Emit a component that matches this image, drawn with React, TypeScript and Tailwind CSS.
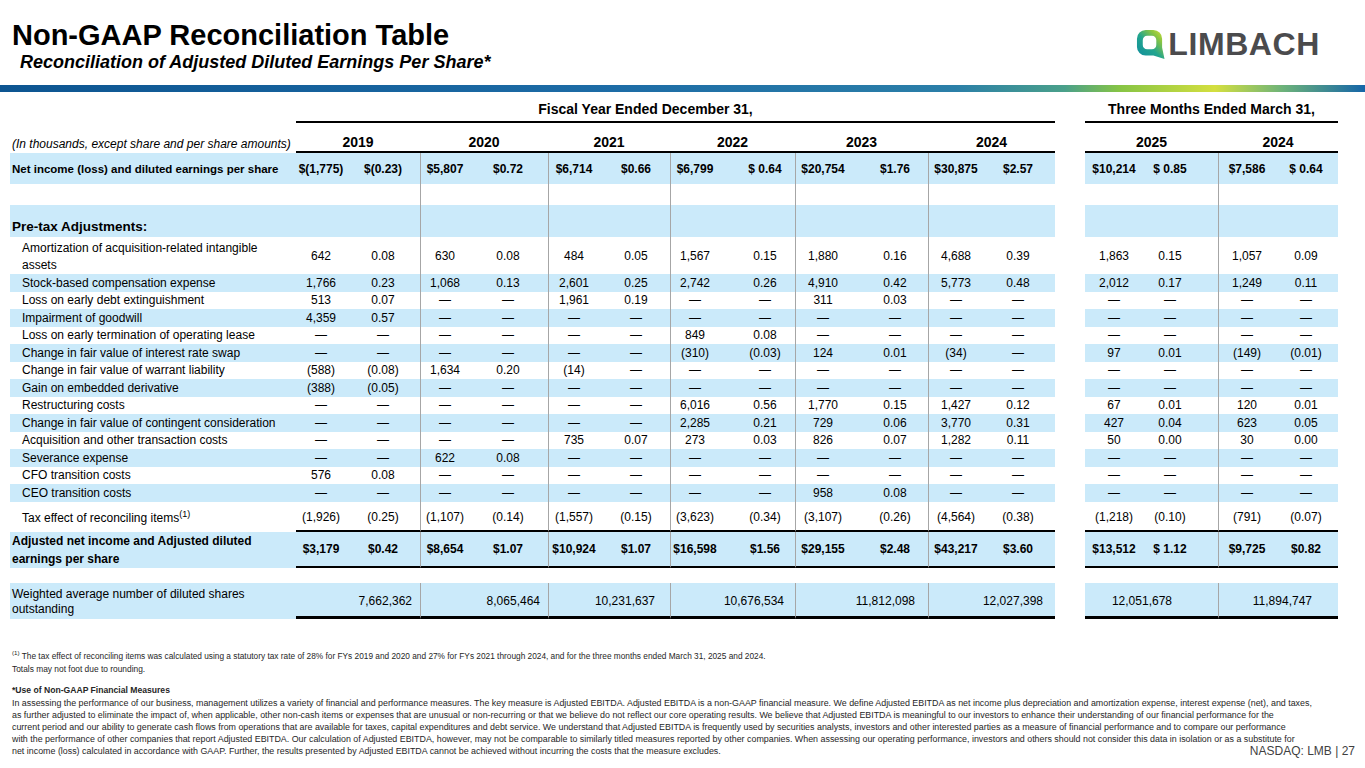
import React from "react";

const D = "—";

type Group = { w: string; a: string; pr: string; wpr: string; line: string };

// column groups, widths taken from the slide grid
const fiscal: Group[] = [
  { w: "w-[124px]", a: "w-[50px]", pr: "pr-[15px]", wpr: "pr-[8px]", line: "" },
  { w: "w-[128px]", a: "w-[48px]", pr: "pr-[18px]", wpr: "pr-[8px]", line: "border-l border-l-[#a6a6a6]" },
  { w: "w-[122px]", a: "w-[50px]", pr: "pr-[12px]", wpr: "pr-[15px]", line: "border-l border-l-[#a6a6a6]" },
  { w: "w-[125px]", a: "w-[48px]", pr: "pr-[8px]", wpr: "pr-[11px]", line: "border-l border-l-[#a6a6a6]" },
  { w: "w-[133px]", a: "w-[54px]", pr: "pr-[11px]", wpr: "pr-[13px]", line: "border-l border-l-[#a6a6a6]" },
  { w: "w-[127px]", a: "w-[54px]", pr: "pr-[15px]", wpr: "pr-[12px]", line: "border-l border-l-[#a6a6a6]" },
];

const quarter: Group[] = [
  { w: "w-[133px]", a: "w-[58px]", pr: "pr-[26px]", wpr: "pr-[46px]", line: "" },
  { w: "w-[120px]", a: "w-[56px]", pr: "pr-[10px]", wpr: "pr-[26px]", line: "border-l border-l-[#a6a6a6]" },
];

const adjustments = [
  { label: "Stock-based compensation expense", v: ["1,766", "0.23", "1,068", "0.13", "2,601", "0.25", "2,742", "0.26", "4,910", "0.42", "5,773", "0.48", "2,012", "0.17", "1,249", "0.11"] },
  { label: "Loss on early debt extinguishment", v: ["513", "0.07", D, D, "1,961", "0.19", D, D, "311", "0.03", D, D, D, D, D, D] },
  { label: "Impairment of goodwill", v: ["4,359", "0.57", D, D, D, D, D, D, D, D, D, D, D, D, D, D] },
  { label: "Loss on early termination of operating lease", v: [D, D, D, D, D, D, "849", "0.08", D, D, D, D, D, D, D, D] },
  { label: "Change in fair value of interest rate swap", v: [D, D, D, D, D, D, "(310)", "(0.03)", "124", "0.01", "(34)", D, "97", "0.01", "(149)", "(0.01)"] },
  { label: "Change in fair value of warrant liability", v: ["(588)", "(0.08)", "1,634", "0.20", "(14)", D, D, D, D, D, D, D, D, D, D, D] },
  { label: "Gain on embedded derivative", v: ["(388)", "(0.05)", D, D, D, D, D, D, D, D, D, D, D, D, D, D] },
  { label: "Restructuring costs", v: [D, D, D, D, D, D, "6,016", "0.56", "1,770", "0.15", "1,427", "0.12", "67", "0.01", "120", "0.01"] },
  { label: "Change in fair value of contingent consideration", v: [D, D, D, D, D, D, "2,285", "0.21", "729", "0.06", "3,770", "0.31", "427", "0.04", "623", "0.05"] },
  { label: "Acquisition and other transaction costs", v: [D, D, D, D, "735", "0.07", "273", "0.03", "826", "0.07", "1,282", "0.11", "50", "0.00", "30", "0.00"] },
  { label: "Severance expense", v: [D, D, "622", "0.08", D, D, D, D, D, D, D, D, D, D, D, D] },
  { label: "CFO transition costs", v: ["576", "0.08", D, D, D, D, D, D, D, D, D, D, D, D, D, D] },
  { label: "CEO transition costs", v: [D, D, D, D, D, D, D, D, "958", "0.08", D, D, D, D, D, D] },
];

const netIncome = ["$(1,775)", "$(0.23)", "$5,807", "$0.72", "$6,714", "$0.66", "$6,799", "$ 0.64", "$20,754", "$1.76", "$30,875", "$2.57", "$10,214", "$ 0.85", "$7,586", "$ 0.64"];
const amortization = ["642", "0.08", "630", "0.08", "484", "0.05", "1,567", "0.15", "1,880", "0.16", "4,688", "0.39", "1,863", "0.15", "1,057", "0.09"];
const taxEffect = ["(1,926)", "(0.25)", "(1,107)", "(0.14)", "(1,557)", "(0.15)", "(3,623)", "(0.34)", "(3,107)", "(0.26)", "(4,564)", "(0.38)", "(1,218)", "(0.10)", "(791)", "(0.07)"];
const adjusted = ["$3,179", "$0.42", "$8,654", "$1.07", "$10,924", "$1.07", "$16,598", "$1.56", "$29,155", "$2.48", "$43,217", "$3.60", "$13,512", "$ 1.12", "$9,725", "$0.82"];
const weighted = ["7,662,362", "8,065,464", "10,231,637", "10,676,534", "11,812,098", "12,027,398", "12,051,678", "11,894,747"];

const BLUE = "bg-[#cbeafa]";

function Row({
  label,
  values,
  bg = false,
  h,
  bold = false,
  labelClass = "pl-[12px]",
  bottom = "",
  pad = "",
  lines = true,
}: {
  label?: React.ReactNode;
  values?: string[];
  bg?: boolean;
  h: string;
  bold?: boolean;
  labelClass?: string;
  bottom?: string;
  pad?: string;
  lines?: boolean;
}) {
  const fill = bg ? BLUE : "";
  const cell = (g: Group, i: number) => (
    <div
      key={i}
      className={`${g.w} shrink-0 flex items-center justify-between ${g.pr} ${pad} ${lines ? g.line : ""} ${fill} ${bottom}`}
    >
      <span className={`${g.a} shrink-0 text-center whitespace-nowrap`}>{values ? values[i * 2] : ""}</span>
      <span className="w-[44px] shrink-0 text-center whitespace-nowrap">{values ? values[i * 2 + 1] : ""}</span>
    </div>
  );
  return (
    <div className={`flex ${h} ${bold ? "font-bold" : ""}`}>
      <div className={`w-[286px] ml-[10px] shrink-0 flex items-center ${fill} ${labelClass}`}>{label}</div>
      {fiscal.map((g, i) => cell(g, i))}
      <div className="w-[30px] shrink-0" />
      {quarter.map((g, i) => cell(g, i + 6))}
    </div>
  );
}

function Logo() {
  return (
    <div className="flex items-center gap-[3px]">
      <svg width="29" height="31" viewBox="0 0 30 32">
        <defs>
          <linearGradient id="lg" x1="0" y1="1" x2="1" y2="0">
            <stop offset="0" stopColor="#0e8aa0" />
            <stop offset="0.45" stopColor="#22a58e" />
            <stop offset="0.75" stopColor="#8cc63f" />
            <stop offset="1" stopColor="#dde43a" />
          </linearGradient>
        </defs>
        <path
          fillRule="evenodd"
          fill="url(#lg)"
          d="M10 1 H18 A9 9 0 0 1 27 10 V19 L29.5 31 L18 27.5 H10 A9 9 0 0 1 1 18.5 V10 A9 9 0 0 1 10 1 Z M11.5 7 H16.5 A4.5 4.5 0 0 1 21 11.5 V16.5 A4.5 4.5 0 0 1 16.5 21 H11.5 A4.5 4.5 0 0 1 7 16.5 V11.5 A4.5 4.5 0 0 1 11.5 7 Z"
        />
      </svg>
      <span className="text-[32px] leading-none font-bold tracking-[0.6px] text-[#4b4b4d]">LIMBACH</span>
    </div>
  );
}

export default function App() {
  return (
    <div className="relative w-[1365px] h-[768px] overflow-hidden bg-white text-black font-['Liberation_Sans',Arial,sans-serif]">
      {/* Title */}
      <div className="flex justify-between h-[85px]">
        <div className="pl-[12px] pt-[18px]">
          <h1 className="text-[29px] leading-[34px] font-bold">Non-GAAP Reconciliation Table</h1>
          <p className="pl-[8px] text-[18px] leading-[21px] font-bold italic">
            Reconciliation of Adjusted Diluted Earnings Per Share*
          </p>
        </div>
        <div className="pt-[28px] pr-[45px]">
          <Logo />
        </div>
      </div>
      <div className="h-[7px] bg-[linear-gradient(90deg,#0d5591_0%,#1d6ca6_45%,#2b7fa8_70%,#4aa08a_78%,#86c445_82%,#d4df3f_89%,#6cb27a_94%,#1565a8_100%)]" />

      {/* Table */}
      <div className="mt-[9px] text-[12px] leading-[14px]">
        <div className="flex h-[22px] font-bold text-[14px] leading-[17px]">
          <div className="w-[296px] shrink-0" />
          <div className="w-[759px] shrink-0 flex justify-center pr-[60px] border-b-2 border-black">
            Fiscal Year Ended December 31,
          </div>
          <div className="w-[30px] shrink-0" />
          <div className="w-[253px] shrink-0 flex justify-center border-b-2 border-black">
            Three Months Ended March 31,
          </div>
        </div>

        <div className="flex h-[30px]">
          <div className="w-[286px] ml-[10px] shrink-0 flex items-end pb-[2px] pl-[2px] italic whitespace-nowrap">
            (In thousands, except share and per share amounts)
          </div>
          {fiscal.map((g, i) => (
            <div key={i} className={`${g.w} shrink-0 flex items-end justify-center border-b-2 border-black font-bold text-[14px] leading-[17px]`}>
              {["2019", "2020", "2021", "2022", "2023", "2024"][i]}
            </div>
          ))}
          <div className="w-[30px] shrink-0" />
          {quarter.map((g, i) => (
            <div key={i} className={`${g.w} shrink-0 flex items-end justify-center border-b-2 border-black font-bold text-[14px] leading-[17px]`}>
              {["2025", "2024"][i]}
            </div>
          ))}
        </div>

        <Row
          h="h-[31px]"
          bg
          bold
          labelClass="pl-[2px] text-[11.5px] whitespace-nowrap"
          label="Net income (loss) and diluted earnings per share"
          values={netIncome}
        />
        <Row h="h-[21px]" />
        <Row
          h="h-[32px]"
          bg
          labelClass="pl-[2px] !items-end pb-[2px] font-bold text-[13.5px] leading-[16px]"
          label="Pre-tax Adjustments:"
        />
        <Row
          h="h-[37px]"
          pad="pt-[1px]"
          labelClass="pl-[12px] pt-[3px] leading-[17px]"
          label={
            <span>
              Amortization of acquisition-related intangible
              <br />
              assets
            </span>
          }
          values={amortization}
        />
        {adjustments.map((r, i) => (
          <Row key={r.label} h="h-[17.5px]" bg={i % 2 === 0} label={r.label} labelClass="pl-[12px] whitespace-nowrap" values={r.v} />
        ))}
        <Row
          h="h-[30px]"
          bottom="border-b-2 border-b-black"
          pad="pt-[2px]"
          labelClass="pl-[12px] pt-[2px]"
          label={
            <span>
              Tax effect of reconciling items<sup>(1)</sup>
            </span>
          }
          values={taxEffect}
        />
        <Row
          h="h-[36px]"
          bg
          bold
          bottom="border-b-2 border-b-black"
          labelClass="pl-[2px] leading-[18px]"
          label={
            <span>
              Adjusted net income and Adjusted diluted
              <br />
              earnings per share
            </span>
          }
          values={adjusted}
        />
        <div className="h-[15px]" />

        <div className="flex h-[36px]">
          <div className={`w-[286px] ml-[10px] shrink-0 flex items-center pl-[2px] pt-[2px] leading-[15px] ${BLUE}`}>
            <span>
              Weighted average number of diluted shares
              <br />
              outstanding
            </span>
          </div>
          {fiscal.map((g, i) => (
            <div key={i} className={`${g.w} shrink-0 flex items-center justify-end pt-[3px] ${g.wpr} ${g.line} ${BLUE} border-b-[3px] border-b-black`}>
              {weighted[i]}
            </div>
          ))}
          <div className="w-[30px] shrink-0" />
          {quarter.map((g, i) => (
            <div key={i} className={`${g.w} shrink-0 flex items-center justify-end pt-[3px] ${g.wpr} ${g.line} ${BLUE} border-b-[3px] border-b-black`}>
              {weighted[i + 6]}
            </div>
          ))}
        </div>
      </div>

      {/* Footnotes */}
      <div className="mt-[31px] pl-[12px] text-[#262626] whitespace-nowrap">
        <div className="text-[8.3px] leading-[13px]">
          <sup>(1)</sup> The tax effect of reconciling items was calculated using a statutory tax rate of 28% for FYs 2019 and 2020 and 27% for FYs 2021 through 2024, and for the three months ended March 31, 2025 and 2024.
        </div>
        <div className="text-[8.4px] leading-[13px]">Totals may not foot due to rounding.</div>
        <div className="mt-[8px] text-[8.6px] leading-[13px] font-bold">*Use of Non-GAAP Financial Measures</div>
        <div className="text-[8.9px] leading-[12px]">
          <div>
            In assessing the performance of our business, management utilizes a variety of financial and performance measures. The key measure is Adjusted EBITDA. Adjusted EBITDA is a non-GAAP financial measure. We define Adjusted EBITDA as net income plus depreciation and amortization expense, interest expense (net), and taxes,
          </div>
          <div>
            as further adjusted to eliminate the impact of, when applicable, other non-cash items or expenses that are unusual or non-recurring or that we believe do not reflect our core operating results. We believe that Adjusted EBITDA is meaningful to our investors to enhance their understanding of our financial performance for the
          </div>
          <div>
            current period and our ability to generate cash flows from operations that are available for taxes, capital expenditures and debt service. We understand that Adjusted EBITDA is frequently used by securities analysts, investors and other interested parties as a measure of financial performance and to compare our performance
          </div>
          <div>
            with the performance of other companies that report Adjusted EBITDA. Our calculation of Adjusted EBITDA, however, may not be comparable to similarly titled measures reported by other companies. When assessing our operating performance, investors and others should not consider this data in isolation or as a substitute for
          </div>
          <div>
            net income (loss) calculated in accordance with GAAP. Further, the results presented by Adjusted EBITDA cannot be achieved without incurring the costs that the measure excludes.
          </div>
        </div>
      </div>

      <div className="absolute right-[10px] bottom-[10px] text-[12px] leading-[14px] text-[#3f3f3f]">NASDAQ: LMB | 27</div>
    </div>
  );
}
